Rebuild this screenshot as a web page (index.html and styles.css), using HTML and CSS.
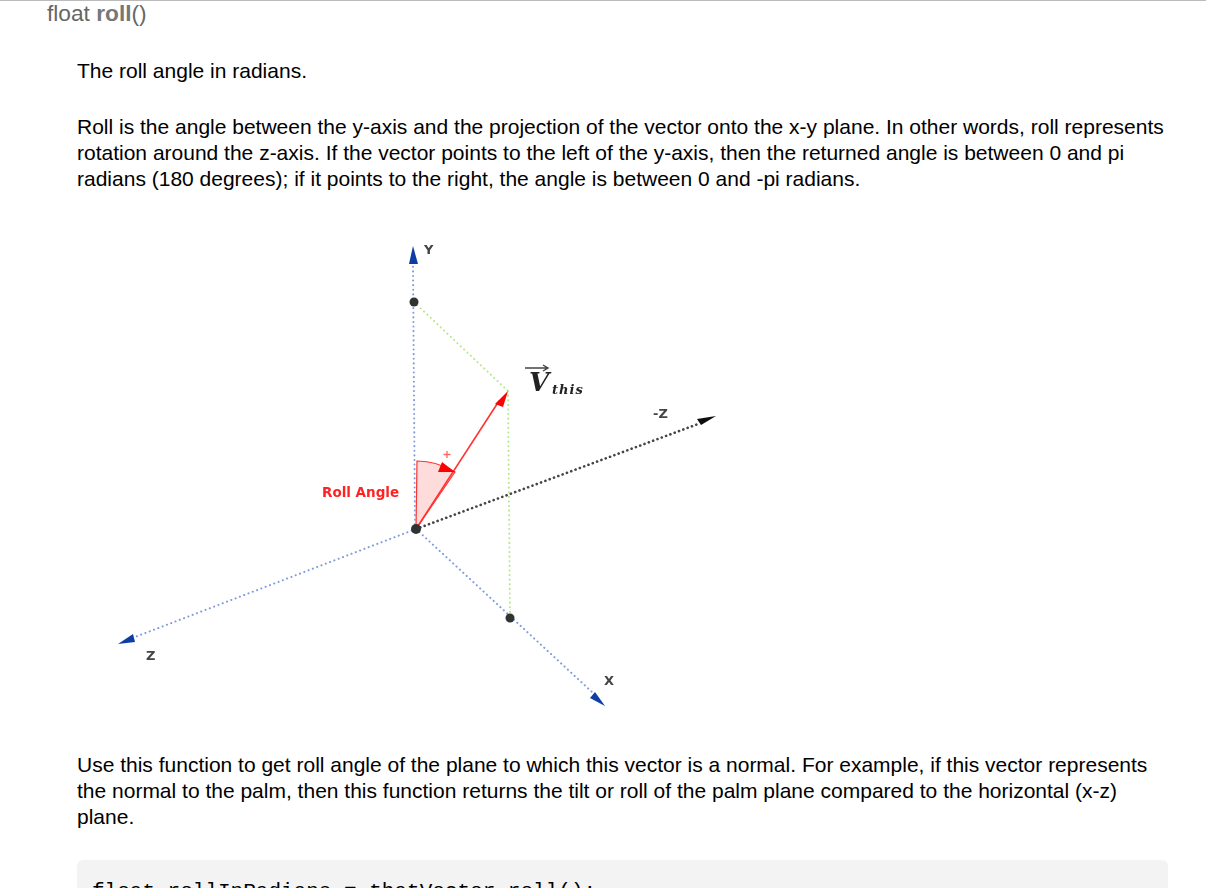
FILE: index.html
```html
<!DOCTYPE html>
<html lang="en">
<head>
  <meta charset="UTF-8" />
  <meta name="viewport" content="width=device-width, initial-scale=1" />
  <title>float roll()</title>
  <link rel="stylesheet" href="styles.css">
</head>
<body>
  <div class="func">
    <h3 class="func-title">float <strong>roll</strong>()</h3>
    <div class="func-desc">
      <p>The roll angle in radians.</p>
      <p>Roll is the angle between the y-axis and the projection of the vector onto the x-y plane. In other words, roll represents rotation around the z-axis. If the vector points to the left of the y-axis, then the returned angle is between 0 and pi radians (180 degrees); if it points to the right, the angle is between 0 and -pi radians.</p>

      <!-- viewBox uses page coordinates so the points can be read off the reference -->
      <svg class="figure" viewBox="77 222 660 500">
        <defs>
          <filter id="soft" x="-5%" y="-5%" width="110%" height="110%">
            <feGaussianBlur stdDeviation="0.5" />
          </filter>
        </defs>
        <g filter="url(#soft)">
          <!-- Wedge -->
          <path class="wedge" d="M416 529 L417 461 Q437 461 455 472 Z" />

          <!-- Axes -->
          <line class="axis-blue" x1="415" y1="529" x2="413" y2="266" />
          <line class="axis-blue" x1="416" y1="529" x2="135" y2="637" />
          <line class="axis-blue" x1="416" y1="529" x2="592" y2="692" />
          <line class="axis-black" x1="416" y1="529" x2="698" y2="424" />

          <!-- Projections -->
          <line class="proj" x1="414" y1="302" x2="508" y2="391" />
          <line class="proj" x1="508" y1="391" x2="510" y2="618" />

          <!-- Arrow heads -->
          <polygon class="head-blue" points="413,246 409,264 418,264" />
          <polygon class="head-blue" points="118,644 133,634 135,642" />
          <polygon class="head-blue" points="605,706 595,692 590,698" />
          <polygon class="head-black" points="716,416 697,419 701,425" />

          <!-- Vector -->
          <line class="vector" x1="416" y1="529" x2="499" y2="401" />
          <polygon class="head-red" points="508,391 495,404 503,407" />
          <polygon class="head-red" points="455,472 442,462 438,472" />
          <path class="plus" d="M447 451 V458 M443.500 454.500 H450.500" />

          <!-- Points -->
          <circle class="dot" cx="414" cy="302" r="4.500" />
          <circle class="dot" cx="510" cy="618" r="4.500" />
          <circle class="dot" cx="416" cy="529" r="5" />

          <!-- Labels -->
          <text class="label" x="424" y="254">Y</text>
          <text class="label" x="653" y="418">-Z</text>
          <text class="label" x="146" y="660">Z</text>
          <text class="label" x="604" y="685">X</text>
          <text class="label-red" x="322" y="497">Roll Angle</text>
          <path class="v-arrow" d="M525 368 H547 M543 365 L548 368 L543 371" />
          <text class="v-name" x="529" y="391">V</text>
          <text class="v-sub" x="552" y="394">this</text>
        </g>
      </svg>

      <p>Use this function to get roll angle of the plane to which this vector is a normal. For example, if this vector represents the normal to the palm, then this function returns the tilt or roll of the palm plane compared to the horizontal (x-z) plane.</p>
      <pre class="code">float rollInRadians = thatVector.roll();</pre>
    </div>
  </div>
</body>
</html>
```

FILE: styles.css
```css
html, body {
  height: 100%;
  overflow: hidden;
}

body {
  margin: 0;
  background-color: #fff;
  color: #000;
  font-family: "Liberation Sans", Arial, sans-serif;
  font-size: 21px;
  line-height: 26px;
}

.func {
  border-top: 1px solid #bbb;
}

.func-title {
  margin: 0;
  padding-left: 47px;
  font-size: 22.700px;
  font-weight: normal;
  line-height: 25px;
  color: #666;
}

.func-title strong {
  color: #777;
}

.func-desc {
  margin: 0 38px 0 77px;
  padding-top: 32px;
}

.func-desc p {
  margin: 0 0 30px;
}

.figure {
  display: block;
  width: 660px;
  height: 500px;
  margin-bottom: 30px;
}

.wedge {
  fill: #ffdcdc;
  stroke: #f33;
  stroke-width: 1.2;
}

.axis-blue, .axis-black, .proj {
  fill: none;
  stroke-linecap: round;
}

.axis-blue {
  stroke: #7f9bdc;
  stroke-width: 2;
  stroke-dasharray: 0.1 4.500;
}

.axis-black {
  stroke: #444;
  stroke-width: 2.600;
  stroke-dasharray: 0.1 4.500;
}

.proj {
  stroke: #b4e888;
  stroke-width: 2;
  stroke-dasharray: 0.1 4.500;
}

.head-blue {
  fill: #0a3ca5;
}

.head-black {
  fill: #111;
}

.head-red {
  fill: #f00;
}

.vector {
  stroke: #f33;
  stroke-width: 1.600;
}

.plus {
  fill: none;
  stroke: #f66;
  stroke-width: 1.300;
}

.dot {
  fill: #333;
}

.label {
  font-family: "DejaVu Sans", sans-serif;
  font-size: 13px;
  font-weight: bold;
  fill: #444;
}

.label-red {
  font-family: "DejaVu Sans", sans-serif;
  font-size: 13.500px;
  font-weight: bold;
  fill: #f22;
}

.v-arrow {
  fill: none;
  stroke: #444;
  stroke-width: 1.400;
}

.v-name, .v-sub {
  font-family: "DejaVu Serif", serif;
  font-style: italic;
  font-weight: bold;
  fill: #222;
}

.v-name {
  font-size: 26px;
}

.v-sub {
  font-size: 13px;
  letter-spacing: 1px;
}

.code {
  margin: 0;
  padding: 19px 15px;
  background-color: #f3f3f3;
  border-radius: 6px;
  font-family: "Liberation Mono", "Courier New", monospace;
  font-size: 21px;
  line-height: 26px;
  color: #000;
}
```
